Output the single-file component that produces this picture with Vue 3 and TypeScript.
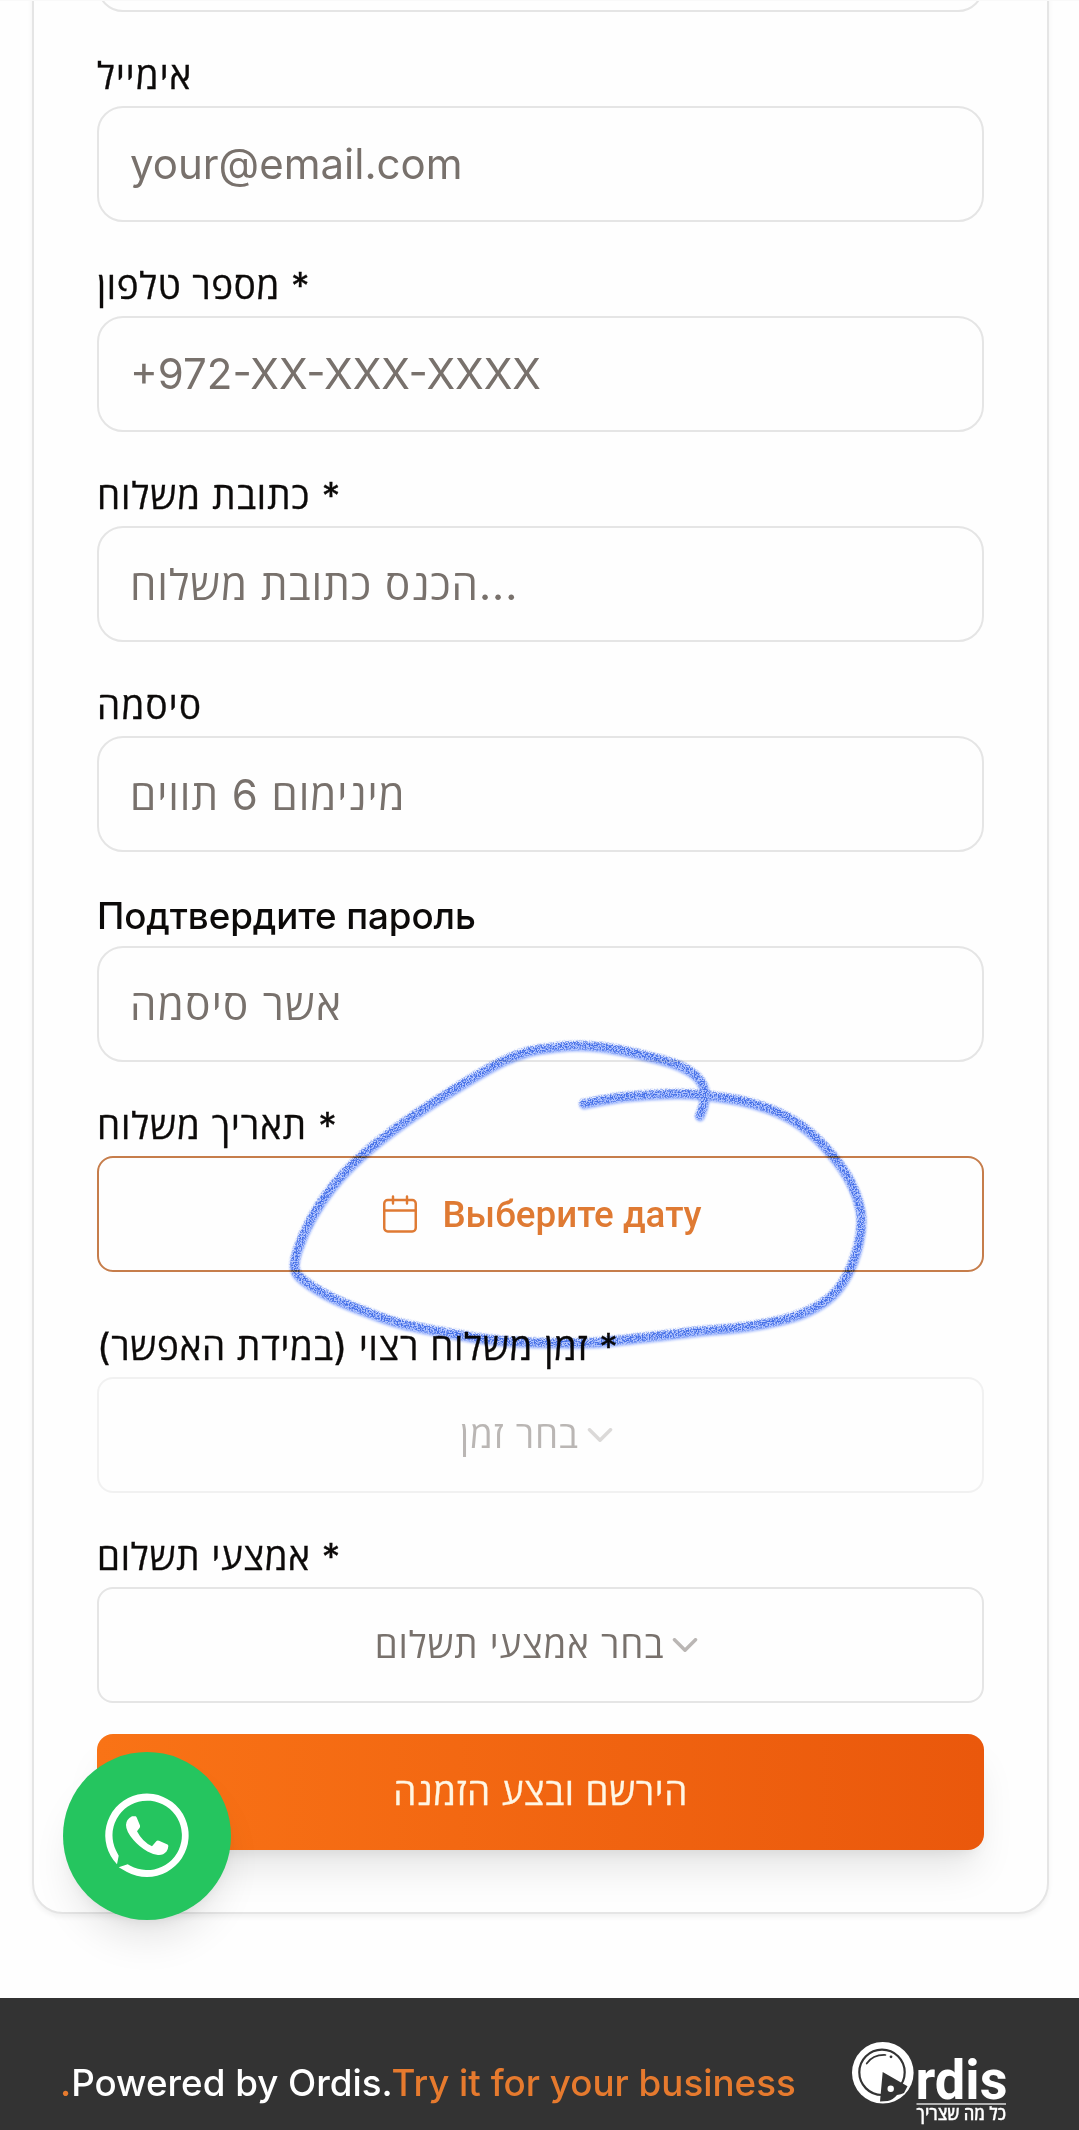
<script setup lang="ts">
interface Field {
  label: string
  value: string
  tracking: string
  valueTracking: string
  medium?: boolean
}

const fields: Field[] = [
  { label: 'אימייל', value: 'your@email.com', tracking: '1.1px', valueTracking: '0' },
  { label: 'מספר טלפון *', value: '+972-XX-XXX-XXXX', tracking: '0.65px', valueTracking: '0' },
  { label: 'כתובת משלוח *', value: 'הכנס כתובת משלוח...', tracking: '1px', valueTracking: '1px' },
  { label: 'סיסמה', value: 'מינימום 6 תווים', tracking: '1.3px', valueTracking: '0.95px' },
  { label: 'Подтвердите пароль', value: 'אשר סיסמה', tracking: '-0.1px', valueTracking: '1.35px', medium: true },
]

type Point = [number, number]

const points: Point[] = [
  [584, 1104], [626, 1097], [677, 1094], [708, 1096], [746, 1102], [781, 1114], [808, 1131],
  [832, 1155], [851, 1183], [861, 1213], [860, 1238], [851, 1268], [836, 1292], [815, 1308],
  [787, 1319], [746, 1327], [695, 1332], [643, 1338], [591, 1343], [540, 1343], [500, 1341],
  [464, 1336], [402, 1324], [366, 1312], [332, 1298], [303, 1280], [295, 1268], [298, 1250],
  [311, 1220], [332, 1188], [361, 1157], [404, 1123], [454, 1090], [500, 1063], [528, 1052],
  [560, 1047], [580, 1046], [609, 1048.5], [650, 1057], [677, 1065], [696, 1076], [705, 1091],
  [703.5, 1106], [700, 1116],
]

// Catmull-Rom spline through the pen points
function smooth(p: Point[]): string {
  let d = `M${p[0][0]} ${p[0][1]}`
  for (let i = 0; i < p.length - 1; i++) {
    const a = p[Math.max(i - 1, 0)]
    const b = p[i]
    const c = p[i + 1]
    const e = p[Math.min(i + 2, p.length - 1)]
    d += `C${b[0] + (c[0] - a[0]) / 6} ${b[1] + (c[1] - a[1]) / 6} ${c[0] - (e[0] - b[0]) / 6} ${c[1] - (e[1] - b[1]) / 6} ${c[0]} ${c[1]}`
  }
  return d
}

const pen = smooth(points)
</script>

<template>
  <div class="page">
    <main class="card">
      <div class="input clipped"></div>
      <div v-for="f in fields" :key="f.label" class="field">
        <div class="label" :class="{ medium: f.medium }" :style="{ letterSpacing: f.tracking }"><span>{{ f.label }}</span></div>
        <div class="input" :style="{ letterSpacing: f.valueTracking }"><span>{{ f.value }}</span></div>
      </div>
      <div class="field">
        <div class="label"><span>תאריך משלוח *</span></div>
        <button class="box date">
          <svg class="icon" viewBox="0 0 24 24"><path d="M8 2v4M16 2v4M3 10h18" /><rect x="3" y="4" width="18" height="18" rx="2" /></svg>
          <span>Выберите дату</span>
        </button>
      </div>
      <div class="field late">
        <div class="label narrow"><span>זמן משלוח רצוי (במידת האפשר) *</span></div>
        <button class="box disabled">
          <span>בחר זמן</span>
          <svg class="icon chevron" viewBox="0 0 24 24"><path d="m6 9 6 6 6-6" /></svg>
        </button>
      </div>
      <div class="field">
        <div class="label narrow"><span>אמצעי תשלום *</span></div>
        <button class="box">
          <span>בחר אמצעי תשלום</span>
          <svg class="icon chevron" viewBox="0 0 24 24"><path d="m6 9 6 6 6-6" /></svg>
        </button>
      </div>
      <button class="submit"><span>הירשם ובצע הזמנה</span></button>
    </main>

    <footer class="footer">
      <p class="powered"><span class="accent">.</span><span>Powered by Ordis.</span><span class="accent">Try it for your business</span></p>
      <svg class="logo" viewBox="0 0 160 92">
        <circle cx="31.8" cy="34.7" r="30.8" fill="#fff" />
        <circle cx="31" cy="34.3" r="22.7" fill="none" stroke="#333" stroke-width="2.2" />
        <path d="M15.700 25.500Q22 16.500 34.500 17" fill="none" stroke="#333" stroke-width="1.700" stroke-linecap="round" />
        <circle cx="40" cy="18.800" r="1.400" fill="#333" />
        <path d="M31.700 34L56.500 48.300L53 55Q50 56.500 46 57Q42 62 36.700 63L29 63.500Z" fill="#333" />
        <circle cx="39.700" cy="50.700" r="3.200" fill="#fff" />
        <text class="wordmark" x="64.500" y="60.500" textLength="92" lengthAdjust="spacingAndGlyphs">rdis</text>
        <path d="M65.500 66H155" stroke="#ddd" stroke-width="1.300" />
        <text class="tagline" x="65.500" y="82" textLength="89.500" lengthAdjust="spacingAndGlyphs">כל מה שצריך</text>
      </svg>
    </footer>

    <a class="whatsapp" aria-label="WhatsApp">
      <svg viewBox="0 0 84 84" fill="#fff">
        <path d="M12 70.300A41.700 41.700 0 1 1 22 77.900L13.700 73.300L22.700 70.300L25.300 71.700A34.700 34.700 0 1 0 11 56.600L13.700 61.700Z" />
        <path d="M27 22.300H30.700Q31.500 23 32 24.300L35 31.500Q35.300 33 34.500 34L32 37.300Q37.500 48 47 52.300L51.500 47Q52.500 46 54 46.800L62.500 50.500Q63.500 51 63.300 52.500Q63 55.500 61.500 57.500Q58 61.500 53 61Q48 60.500 42.500 57.500Q34 52.500 28.500 46Q21 37.500 21 31Q21 25.500 27 22.300Z" />
      </svg>
    </a>

    <svg class="scribble" viewBox="0 0 1079 2130">
      <defs>
        <filter id="grain" filterUnits="userSpaceOnUse" x="270" y="1020" width="620" height="350">
          <feTurbulence type="fractalNoise" baseFrequency="0.75" numOctaves="2" seed="4" result="noise" />
          <feColorMatrix in="noise" type="matrix" values="0 0 0 0 0  0 0 0 0 0  0 0 0 0 0  0 0 0 5 -2" result="mask" />
          <feGaussianBlur in="SourceGraphic" stdDeviation="1.2" result="soft" />
          <feComposite in="soft" in2="mask" operator="in" />
        </filter>
        <filter id="soften" filterUnits="userSpaceOnUse" x="270" y="1020" width="620" height="350">
          <feGaussianBlur stdDeviation="1.1" />
        </filter>
      </defs>
      <g filter="url(#soften)"><path :d="pen" class="wash" transform="translate(0 0.800)" /></g>
      <g filter="url(#grain)"><path :d="pen" class="grain" transform="translate(-0.300 -0.700)" /></g>
    </svg>
  </div>
</template>

<style>
body {
  margin: 0;
  background: #fefefe;
}
</style>

<style scoped>
.page {
  position: relative;
  width: 1079px;
  height: 2130px;
  overflow: hidden;
  box-sizing: border-box;
  padding: 0 30px 0 32px;
  background: #fefefe;
  border-top: 1px solid #f9f9f9;
  font-family: Inter, 'Open Sans', sans-serif;
  display: flex;
  flex-direction: column;
}
.card {
  box-sizing: border-box;
  height: 2013px;
  margin-top: -100px;
  flex: none;
  padding: 0 63px;
  border: 2px solid #e5e5e5;
  border-radius: 31px;
  background: #fefefe;
  box-shadow: 0 3px 5px rgba(0, 0, 0, 0.05);
}
.input,
.box {
  box-sizing: border-box;
  width: 100%;
  height: 116px;
  display: flex;
  align-items: center;
  border: 2px solid #e5e5e5;
  border-radius: 26px;
  background: #fefefe;
  color: #78716c;
  white-space: nowrap;
}
.input {
  padding: 0 31px 2px;
  font-size: 42px;
}
.clipped {
  margin-top: -7px;
}
.field {
  height: 210px;
  display: flex;
  flex-direction: column;
  justify-content: flex-end;
}
.late {
  height: 220.5px;
}
.label {
  height: 56px;
  line-height: 52px;
  font-size: 36.75px;
  letter-spacing: 0.95px;
  color: #0c0a09;
  white-space: nowrap;
  -webkit-text-stroke: 0.35px currentColor;
}
.narrow {
  letter-spacing: 0.78px;
}
.medium {
  font-weight: 500;
  -webkit-text-stroke: 0;
}
.box {
  padding: 0;
  justify-content: center;
  border-radius: 16px;
  font: 400 36.75px/1.4 Inter, 'Open Sans', sans-serif;
  letter-spacing: 0.9px;
}
.icon {
  width: 42px;
  height: 42px;
  flex: none;
  fill: none;
  stroke: currentColor;
  stroke-width: 1.4;
  stroke-linecap: round;
  stroke-linejoin: round;
}
.chevron {
  opacity: 0.5;
  stroke-width: 2;
}
.date {
  gap: 21px;
  border-color: #c67d4b;
  color: #df7a33;
  font-family: Roboto, sans-serif;
  font-weight: 500;
  letter-spacing: 0;
}
.date span {
  padding-top: 1px;
}
.disabled {
  opacity: 0.5;
}
.submit {
  width: 100%;
  height: 116px;
  margin-top: 31px;
  padding: 0;
  border: 0;
  border-radius: 16px;
  background: linear-gradient(to right, #f97316, #ea580c);
  color: #fff6e4;
  font: 400 36.75px/1.4 Inter, 'Open Sans', sans-serif;
  letter-spacing: 0.6px;
  -webkit-text-stroke: 0.3px currentColor;
  box-shadow: 0 26px 39px -8px rgba(0, 0, 0, 0.1), 0 10px 16px -10px rgba(0, 0, 0, 0.1);
}
.footer {
  flex: none;
  height: 132px;
  margin: 84px -30px 0 -32px;
  padding-left: 60px;
  box-sizing: border-box;
  display: flex;
  align-items: flex-start;
  background: #333;
}
.powered {
  width: 791px;
  margin: 59px 0 0;
  font-size: 36.75px;
  line-height: 52px;
  font-weight: 500;
  color: #fff;
  white-space: nowrap;
}
.accent {
  color: #e67a2e;
}
.logo {
  width: 160px;
  height: 92px;
  margin-top: 40px;
}
.wordmark {
  font: 700 55px Roboto, sans-serif;
  fill: #fff;
}
.tagline {
  font: 600 18px 'Open Sans', sans-serif;
  fill: #fff;
  stroke: #fff;
  stroke-width: 0.3px;
}
.whatsapp {
  position: absolute;
  left: 63px;
  top: 1751px;
  width: 168px;
  height: 168px;
  border-radius: 50%;
  background: #25c55f;
  display: flex;
  align-items: center;
  justify-content: center;
  box-shadow: 0 26px 39px -8px rgba(0, 0, 0, 0.1), 0 10px 16px -10px rgba(0, 0, 0, 0.1);
}
.whatsapp svg {
  width: 84px;
  height: 84px;
  overflow: visible;
}
.scribble {
  position: absolute;
  left: 0;
  top: -1px;
  width: 1079px;
  height: 2130px;
  mix-blend-mode: multiply;
  pointer-events: none;
}
.wash,
.grain {
  fill: none;
  stroke-linecap: round;
  stroke-linejoin: round;
}
.wash {
  stroke: #b3c6ff;
  stroke-width: 10;
}
.grain {
  stroke: #4470e8;
  stroke-width: 8.5;
}
</style>
